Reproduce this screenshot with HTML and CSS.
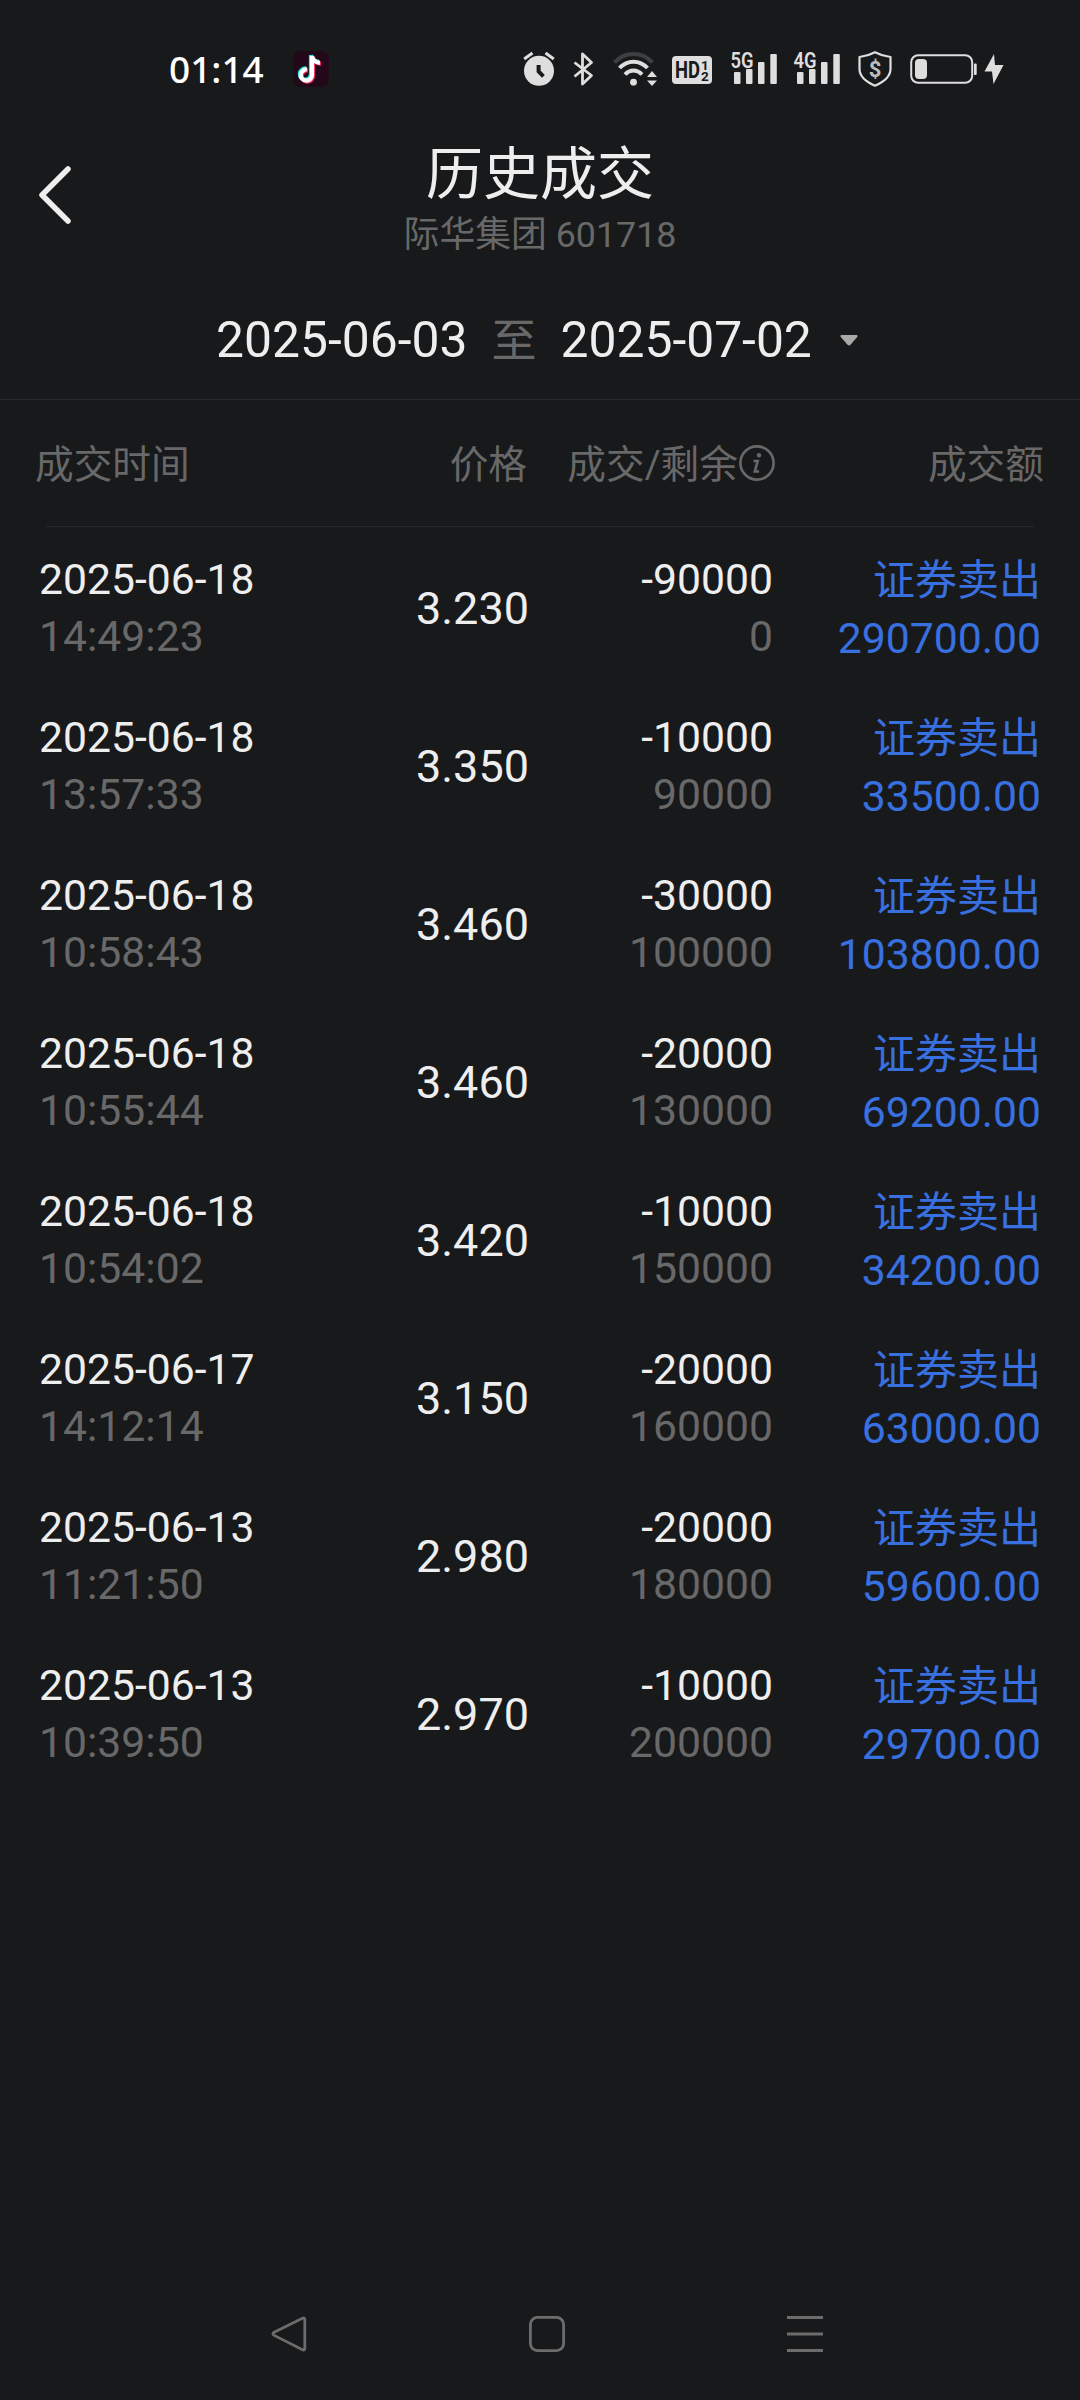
FILE: index.html
```
<!DOCTYPE html>
<html lang="zh-CN">
<head>
  <meta charset="UTF-8">
  <meta name="viewport" content="width=device-width, initial-scale=1">
  <title>历史成交</title>
  <link rel="stylesheet" href="styles.css">
</head>
<body>
  <div class="screen">
    <!-- 状态栏 -->
    <div class="status-bar">
      <span class="clock">01:14</span>
      <svg class="icon-app" width="36" height="36" viewBox="0 0 36 36">
        <rect width="36" height="36" rx="8" fill="#220818"/>
        <g fill="none" stroke-width="4.2">
          <path stroke="#25e5e0" d="M13 17.500a5.600 5.600 0 1 0 5 5.600V4c.5 3.800 3.500 6.500 8 6.800"/>
          <path stroke="#f3265a" d="M15 19.500a5.600 5.600 0 1 0 5 5.600V6c.5 3.800 3.500 6.500 8 6.800"/>
          <path stroke="#fff" d="M14 18.500a5.600 5.600 0 1 0 5 5.600V5c.5 3.800 3.500 6.500 8 6.800"/>
        </g>
      </svg>

      <div class="status-icons">
        <svg class="icon-alarm" width="33" height="36" viewBox="0 0 33 36">
          <circle cx="16" cy="19.800" r="15"/>
          <path class="line" stroke-width="3" d="M1.200 8l8.300-6M30.800 8l-8.300-6"/>
          <path fill="none" stroke="#18191b" stroke-width="4" d="M15.600 14v6.500l4.800 4.800"/>
        </svg>
        <svg class="icon-bt" width="22" height="36" viewBox="0 0 22 36">
          <path class="line" stroke-width="2.800" d="M1.500 11.500l17 13-9 8.500V3l9 8.500-17 14"/>
        </svg>
        <svg class="icon-wifi" width="45" height="36" viewBox="0 0 45 36">
          <path class="line dim" stroke-width="4" d="M1.500 11.500c10-11.500 28-11.500 38 0"/>
          <path class="line" stroke-width="4" d="M6.500 17c8-8.500 20-8.500 28 0M12 23.500c5-5.300 12-5.300 17 0"/>
          <circle cx="20.500" cy="31.200" r="3.400"/>
          <path d="M39 20l5 6H34zM39 35l-5-5.500h10z"/>
        </svg>
        <svg class="icon-hd" width="40" height="36" viewBox="0 0 40 36">
          <rect y="5" width="40" height="28" rx="4"/>
          <g class="hd-text">
            <text x="3" y="27.300" font-size="23" textLength="25" lengthAdjust="spacingAndGlyphs">HD</text>
            <text x="29" y="18.500" font-size="13.500">1</text>
            <text x="29" y="29.700" font-size="13.500">2</text>
          </g>
        </svg>
        <svg class="icon-signal" width="46" height="36" viewBox="0 0 46 36">
          <text x="-0.500" y="16.800" font-size="22" textLength="23" lengthAdjust="spacingAndGlyphs">5G</text>
          <rect x="3" y="21" width="6.500" height="12" rx="1"/>
          <rect x="15" y="18" width="6.500" height="15" rx="1"/>
          <rect x="27" y="11" width="6.500" height="22" rx="1"/>
          <rect x="39.300" y="3" width="6.500" height="30" rx="1"/>
        </svg>
        <svg class="icon-signal" width="46" height="36" viewBox="0 0 46 36">
          <text x="-0.500" y="16.800" font-size="22" textLength="23" lengthAdjust="spacingAndGlyphs">4G</text>
          <rect x="3" y="21" width="6.500" height="12" rx="1"/>
          <rect x="15" y="18" width="6.500" height="15" rx="1"/>
          <rect x="27" y="11" width="6.500" height="22" rx="1"/>
          <rect x="39.300" y="3" width="6.500" height="30" rx="1"/>
        </svg>
        <svg class="icon-shield" width="34" height="36" viewBox="0 0 34 36">
          <path class="line" stroke-width="2.200" d="M17 1.300C12 4 7 5.500 1.500 6v12c0 8.500 7 13 15.500 16.700C25.500 31 32.500 26.500 32.500 18V6C27 5.500 22 4 17 1.300z"/>
          <text class="cash" x="17" y="25.500" font-size="22" text-anchor="middle">$</text>
        </svg>
        <svg class="icon-battery" width="67" height="36" viewBox="0 0 67 36">
          <rect class="line" x="1.200" y="4.200" width="61" height="27.600" rx="7" stroke-width="2"/>
          <rect x="5" y="8" width="12" height="20" rx="4"/>
          <rect x="64" y="12.500" width="2.700" height="11.500" rx="1"/>
        </svg>
        <svg class="icon-bolt" width="20" height="36" viewBox="0 0 20 36">
          <path d="M10 3L.5 20.500H8L9.500 33 19.500 14H11z"/>
        </svg>
      </div>
    </div>

    <!-- 标题 -->
    <header class="header">
      <svg class="back" width="32" height="58" viewBox="0 0 32 58">
        <path d="M29 3L3 29l26 26"/>
      </svg>
      <div class="heading">
        <h1>历史成交</h1>
        <p>际华集团 601718</p>
      </div>
    </header>

    <!-- 日期范围 -->
    <div class="date-range">
      <span>2025-06-03</span>
      <span class="to">至</span>
      <span>2025-07-02</span>
      <svg class="caret" width="18" height="11" viewBox="0 0 18 11">
        <path d="M1.500 0h15c1.200 0 1.500 1.200.700 2L10.500 9.800c-.900.900-2.100.900-3 0L.800 2C0 1.200.300 0 1.500 0z"/>
      </svg>
    </div>

    <!-- 成交列表 -->
    <div class="table">
      <div class="table-head">
        <span>成交时间</span>
        <span class="num">价格</span>
        <span class="num with-info">成交/剩余<svg width="36" height="36" viewBox="0 0 36 36">
            <circle cx="18" cy="18" r="16.600"/>
            <path d="M14.500 16h4.200l-2.900 10.500h4.200"/>
            <circle class="dot" cx="20" cy="10.300" r="2.200"/>
          </svg></span>
        <span class="num">成交额</span>
      </div>

      <div class="row">
        <div class="time"><p>2025-06-18</p><p class="sub">14:49:23</p></div>
        <div class="price">3.230</div>
        <div class="qty"><p>-90000</p><p class="sub">0</p></div>
        <div class="amount"><p class="type">证券卖出</p><p>290700.00</p></div>
      </div>
      <div class="row">
        <div class="time"><p>2025-06-18</p><p class="sub">13:57:33</p></div>
        <div class="price">3.350</div>
        <div class="qty"><p>-10000</p><p class="sub">90000</p></div>
        <div class="amount"><p class="type">证券卖出</p><p>33500.00</p></div>
      </div>
      <div class="row">
        <div class="time"><p>2025-06-18</p><p class="sub">10:58:43</p></div>
        <div class="price">3.460</div>
        <div class="qty"><p>-30000</p><p class="sub">100000</p></div>
        <div class="amount"><p class="type">证券卖出</p><p>103800.00</p></div>
      </div>
      <div class="row">
        <div class="time"><p>2025-06-18</p><p class="sub">10:55:44</p></div>
        <div class="price">3.460</div>
        <div class="qty"><p>-20000</p><p class="sub">130000</p></div>
        <div class="amount"><p class="type">证券卖出</p><p>69200.00</p></div>
      </div>
      <div class="row">
        <div class="time"><p>2025-06-18</p><p class="sub">10:54:02</p></div>
        <div class="price">3.420</div>
        <div class="qty"><p>-10000</p><p class="sub">150000</p></div>
        <div class="amount"><p class="type">证券卖出</p><p>34200.00</p></div>
      </div>
      <div class="row">
        <div class="time"><p>2025-06-17</p><p class="sub">14:12:14</p></div>
        <div class="price">3.150</div>
        <div class="qty"><p>-20000</p><p class="sub">160000</p></div>
        <div class="amount"><p class="type">证券卖出</p><p>63000.00</p></div>
      </div>
      <div class="row">
        <div class="time"><p>2025-06-13</p><p class="sub">11:21:50</p></div>
        <div class="price">2.980</div>
        <div class="qty"><p>-20000</p><p class="sub">180000</p></div>
        <div class="amount"><p class="type">证券卖出</p><p>59600.00</p></div>
      </div>
      <div class="row">
        <div class="time"><p>2025-06-13</p><p class="sub">10:39:50</p></div>
        <div class="price">2.970</div>
        <div class="qty"><p>-10000</p><p class="sub">200000</p></div>
        <div class="amount"><p class="type">证券卖出</p><p>29700.00</p></div>
      </div>
    </div>

    <!-- 系统导航键 -->
    <nav class="nav-bar">
      <svg width="36" height="36" viewBox="0 0 36 36">
        <path d="M31.500 2.300L3.200 16.200q-2.600 1.600 0 3.200l28.300 14.300q2.300 1 2.300-1.500V3.800q0-2.500-2.300-1.500z"/>
      </svg>
      <svg width="36" height="36" viewBox="0 0 36 36">
        <rect x="1.400" y="1.400" width="33.200" height="33.200" rx="7"/>
      </svg>
      <svg width="36" height="36" viewBox="0 0 36 36">
        <path d="M0 1.500h36M0 18h36M0 34.500h36"/>
      </svg>
    </nav>
  </div>
</body>
</html>
```
FILE: styles.css
```
:root {
  --color-bg: #18191b;
  --color-text: #eeeeee;
  --color-gray: #686868;
  --color-blue: #3870e0;
  --color-line: #27282a;
  --color-icon: #dedede;
}
*, *::before, *::after { box-sizing: border-box; }
body {
  margin: 0;
  background: var(--color-bg);
  color: var(--color-text);
  font-family: Roboto, "Noto Sans CJK SC", sans-serif;
}
h1, p { margin: 0; font-weight: 400; }
svg { display: block; flex: none; overflow: visible; }
.screen {
  width: 1080px;
  height: 2400px;
  display: flex;
  flex-direction: column;
}

/* 状态栏 */
.status-bar {
  height: 138px;
  display: flex;
  align-items: center;
  padding: 0 76px 0 169px;
}
.clock {
  width: 124px;
  font: 500 37px/44px "Noto Sans", sans-serif;
  color: #fff;
}
.status-icons {
  margin-left: auto;
  display: flex;
  fill: var(--color-icon);
}
.status-icons .line {
  fill: none;
  stroke: var(--color-icon);
  stroke-linejoin: round;
}
.status-icons .dim { stroke: #3e3f41; }
.status-icons .cash { fill: #bdbdbd; }
.status-icons text { font-family: Roboto, sans-serif; font-weight: 700; }
.status-icons .icon-signal text { font-weight: 600; }
.hd-text { fill: var(--color-bg); }
.icon-bt { margin-left: 17px; }
.icon-wifi { margin-left: 18px; }
.icon-hd { margin-left: 14px; }
.icon-signal { margin-left: 19px; }
.icon-signal + .icon-signal { margin-left: 17px; }
.icon-shield { margin-left: 18px; }
.icon-battery { margin-left: 18px; }
.icon-bolt { margin-left: 7px; }

/* 标题 */
.header {
  height: 172px;
  display: flex;
  align-items: flex-start;
  padding: 5px 39px 0;
}
.back {
  margin-top: 23px;
  fill: none;
  stroke: var(--color-text);
  stroke-width: 5.5;
  stroke-linecap: round;
  stroke-linejoin: round;
}
.heading {
  flex: 1;
  margin-right: 32px;
  text-align: center;
}
.heading h1 { font-size: 57px; line-height: 64px; }
.heading p {
  margin-top: 6px;
  font-size: 35.8px;
  line-height: 44px;
  color: var(--color-gray);
}

/* 日期范围 */
.date-range {
  height: 90px;
  display: flex;
  padding-left: 216px;
  border-bottom: 1px solid var(--color-line);
  font-size: 49.8px;
  line-height: 61px;
}
.date-range .to {
  margin: 0 24px;
  font-size: 45px;
  line-height: 63px;
  color: var(--color-gray);
}
.caret { margin: 25px 0 0 28px; fill: #a8a8a8; }

/* 成交列表 */
.table { flex: 1; }
.table-head, .row {
  display: grid;
  grid-template-columns: 290px 202px 248px 1fr;
}
.table-head {
  height: 127px;
  padding: 40px 36px 0 35px;
  font-size: 38.7px;
  line-height: 50px;
  color: var(--color-gray);
  background: linear-gradient(var(--color-line), var(--color-line)) 46px 100% / 988px 1px no-repeat;
}
.num { text-align: right; }
.with-info {
  display: flex;
  justify-content: flex-end;
}
.with-info svg {
  margin: 5px 0 0 1px;
  fill: none;
  stroke: var(--color-gray);
  stroke-width: 2.6;
}
.with-info .dot { fill: var(--color-gray); stroke: none; }
.row {
  height: 158px;
  padding: 24px 39px 0;
  grid-template-columns: 290px 200px 244px 1fr;
  font-size: 42.7px;
  line-height: 57px;
}
.sub { color: var(--color-gray); }
.price {
  font-size: 45px;
  line-height: 116px;
  text-align: right;
}
.qty { text-align: right; }
.amount {
  padding-top: 1px;
  text-align: right;
  color: var(--color-blue);
}
.type {
  margin-bottom: 1px;
  font-size: 42px;
}

/* 系统导航键 */
.nav-bar {
  height: 84px;
  display: flex;
  justify-content: space-between;
  padding: 0 257px 0 271px;
  fill: none;
  stroke: #6c6c6c;
  stroke-width: 2.8;
}
```
